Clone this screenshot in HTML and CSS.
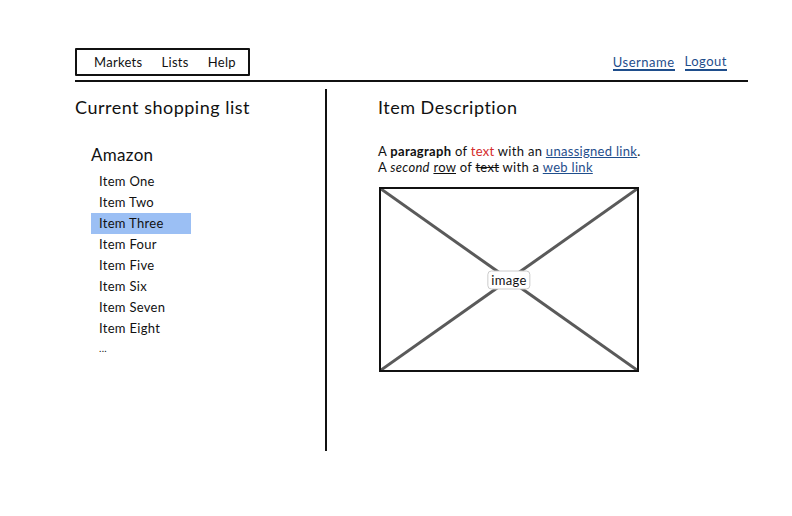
FILE: index.html
```html
<!DOCTYPE html>
<html lang="en">
<head>
    <meta charset="UTF-8">
    <meta name="viewport" content="width=device-width, initial-scale=1.0">
    <title>Shopping List</title>
    <link rel="stylesheet" href="styles.css">
</head>
<body>
    <div class="page">
        <header class="topbar">
            <nav class="menu">
                <a href="#">Markets</a>
                <a href="#">Lists</a>
                <a href="#">Help</a>
            </nav>
            <div class="account">
                <a href="#" class="user-link">Username</a>
                <a href="#" class="logout-link">Logout</a>
            </div>
        </header>
        <div class="main">
            <div class="sidebar">
                <h2 class="title">Current shopping list</h2>
                <div class="store">
                    <h3>Amazon</h3>
                    <ul class="items">
                        <li>Item One</li>
                        <li>Item Two</li>
                        <li class="selected">Item Three</li>
                        <li>Item Four</li>
                        <li>Item Five</li>
                        <li>Item Six</li>
                        <li>Item Seven</li>
                        <li>Item Eight</li>
                        <li class="more">...</li>
                    </ul>
                </div>
            </div>
            <div class="details">
                <h2 class="title">Item Description</h2>
                <p class="desc">
                    A <b>paragraph</b> of <span class="red">text</span> with an <a href="#">unassigned link</a>.<br>
                    A <i>second</i> <u>row</u> of <s>text</s> with a <a href="#">web link</a>
                </p>
                <div class="image-box">
                    <svg class="cross" viewBox="0 0 100 100" preserveAspectRatio="none">
                        <line x1="0" y1="0" x2="100" y2="100" stroke="#5a5a5a" stroke-width="3" vector-effect="non-scaling-stroke"/>
                        <line x1="100" y1="0" x2="0" y2="100" stroke="#5a5a5a" stroke-width="3" vector-effect="non-scaling-stroke"/>
                    </svg>
                    <span class="image-label">image</span>
                </div>
            </div>
        </div>
    </div>
</body>
</html>
```

FILE: styles.css
```css
body {
    font-family: Lato, "Open Sans", sans-serif;
    margin: 0;
    padding: 0;
    background: #fff;
    color: #111;
    letter-spacing: 0.3px;
}
a {
    color: #1f4e8c;
}
.page {
    width: 673px;
    margin-left: 75px;
    padding-top: 48px;
}
.topbar {
    display: flex;
    justify-content: space-between;
    align-items: flex-start;
    border-bottom: 2px solid #111;
    height: 32px;
}
.menu {
    height: 24px;
    border: 2px solid #111;
    border-radius: 1px;
    display: flex;
    align-items: center;
    padding-left: 17px;
    box-sizing: content-box;
    width: 154px;
}
.menu a {
    color: #111;
    text-decoration: none;
    font-size: 13px;
    margin-right: 19px;
}
.account {
    display: flex;
    gap: 10px;
    margin-top: 6px;
    margin-right: 21px;
    font-size: 13px;
    letter-spacing: 0.5px;
}
.account a {
    text-decoration: none;
    border-bottom: 2px solid #1f4e8c;
    line-height: 14px;
}
.account .user-link {
    margin-top: 1px;
}
.main {
    display: flex;
    padding-top: 7px;
}
.sidebar {
    width: 250px;
    height: 362px;
    border-right: 2px solid #111;
}
.title {
    font-size: 18px;
    font-weight: normal;
    margin: 7px 0 0 0;
    line-height: 22px;
    letter-spacing: 0.5px;
}
.store {
    padding-left: 16px;
    margin-top: 26px;
}
.store h3 {
    font-size: 17px;
    font-weight: normal;
    margin: 0 0 5px 0;
    line-height: 22px;
}
.items {
    list-style: none;
    margin: 0;
    padding: 0;
    font-size: 13px;
}
.items li {
    height: 21px;
    line-height: 21px;
    width: 92px;
    padding-left: 8px;
}
.items .selected {
    background: #9bbff4;
}
.items .more {
    font-size: 10px;
    line-height: 19px;
}
.details {
    padding-left: 51px;
}
.desc {
    font-size: 13px;
    line-height: 16px;
    margin: 25px 0 0 0;
}
.red {
    color: #d42a2a;
}
.image-box {
    position: relative;
    margin-top: 12px;
    width: 256px;
    height: 181px;
    border: 2px solid #111;
    box-sizing: content-box;
    margin-left: 1px;
}
.cross {
    display: block;
    width: 100%;
    height: 100%;
}
.image-label {
    position: absolute;
    left: 50%;
    top: 50%;
    transform: translate(-50%, -50%);
    background: #fff;
    border: 1px solid #ccc;
    border-radius: 4px;
    font-size: 13px;
    padding: 0 3px;
    line-height: 17px;
}
```
